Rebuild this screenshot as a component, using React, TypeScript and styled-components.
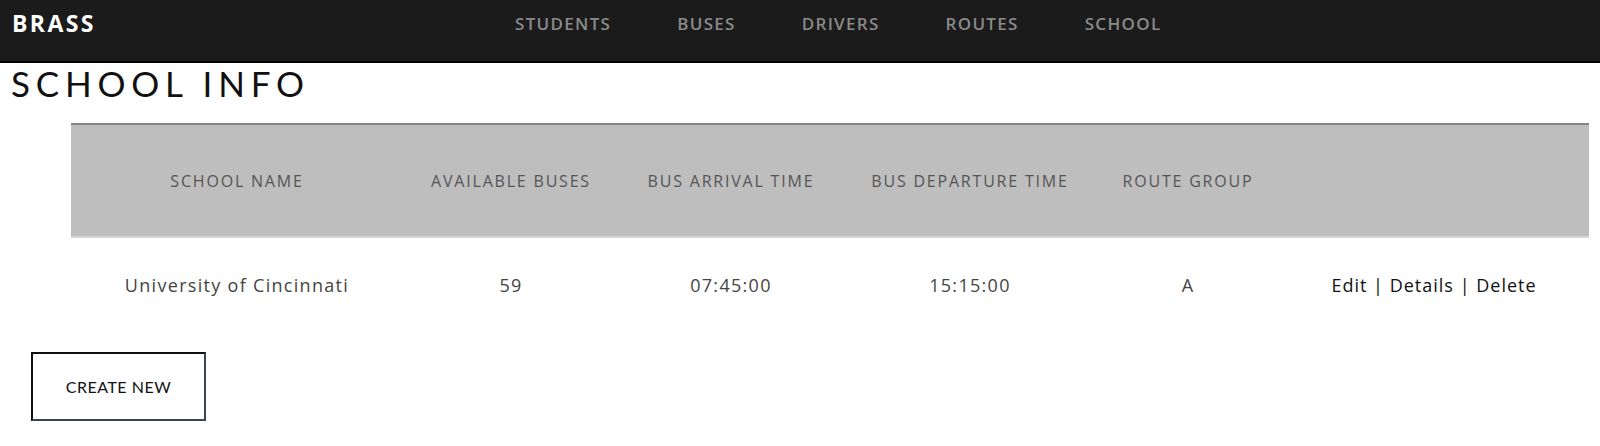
import React from "react";
import styled, { createGlobalStyle } from "styled-components";

const GlobalStyle = createGlobalStyle`
  html, body { margin: 0; padding: 0; background: #fff; }
  body { font-family: "Open Sans", "Liberation Sans", sans-serif; }
`;

const NavBar = styled.header`
  background: #1b1b1b;
  border-bottom: 2px solid #000;
  display: flex;
  align-items: flex-start;
  padding: 9px 12px 0 12px;
  box-sizing: border-box;
  height: 63px;
`;

const Brand = styled.div`
  font-family: "Open Sans", sans-serif;
  font-weight: 700;
  font-size: 23px;
  line-height: 28px;
  color: #fff;
  letter-spacing: 2.4px;
  width: 85px;
`;

const NavList = styled.nav`
  display: flex;
  gap: 66px;
  margin-left: 418px;
  padding-top: 3px;
`;

const NavItem = styled.a`
  font-family: "Open Sans", sans-serif;
  font-weight: 600;
  font-size: 17px;
  line-height: 24px;
  letter-spacing: 1.3px;
  color: #8a8a8a;
  text-transform: uppercase;
  text-decoration: none;
`;

const Title = styled.h1`
  margin: 0;
  padding-left: 11px;
  font-family: "Lato", sans-serif;
  font-weight: 400;
  font-size: 35px;
  line-height: 40px;
  letter-spacing: 5.8px;
  color: #111;
`;

const TableWrap = styled.div`
  padding: 20px 11px 0 71px;
`;

const Table = styled.table`
  width: 100%;
  border-collapse: collapse;
  table-layout: fixed;
`;

const HeadRow = styled.tr`
  background: #bebebe;
  border-top: 2px solid #858585;
  border-bottom: 2px solid #d4d4d4;
  height: 113px;
`;

const Th = styled.th`
  font-family: "Open Sans", sans-serif;
  font-weight: 400;
  font-size: 16px;
  letter-spacing: 1.8px;
  color: #555;
  text-align: center;
  padding: 0;
`;

const Row = styled.tr`
  height: 94px;
`;

const Td = styled.td<{ $dark?: boolean }>`
  font-family: "Open Sans", sans-serif;
  font-size: 18px;
  letter-spacing: ${(p) => (p.$dark ? "1px" : "1.3px")};
  color: ${(p) => (p.$dark ? "#111" : "#444")};
  text-align: center;
  padding: 0;
`;

const ActionLink = styled.a`
  color: #111;
  text-decoration: none;
`;

const ButtonArea = styled.div`
  padding: 21px 0 0 31px;
`;

const CreateButton = styled.button`
  width: 175px;
  height: 69px;
  background: #fff;
  border: 2px solid;
  border-color: #111 #3d434b #3d434b #111;
  font-family: "Lato", sans-serif;
  font-size: 16px;
  color: #111;
  letter-spacing: 0.5px;
  cursor: pointer;
`;

const columns = [
  { label: "SCHOOL NAME", width: 332 },
  { label: "AVAILABLE BUSES", width: 216 },
  { label: "BUS ARRIVAL TIME", width: 224 },
  { label: "BUS DEPARTURE TIME", width: 254 },
  { label: "ROUTE GROUP", width: 182 },
  { label: "", width: undefined },
];

export default function App() {
  return (
    <>
      <GlobalStyle />
      <NavBar>
        <Brand>BRASS</Brand>
        <NavList>
          {["Students", "Buses", "Drivers", "Routes", "School"].map((n) => (
            <NavItem key={n} href="#">
              {n}
            </NavItem>
          ))}
        </NavList>
      </NavBar>
      <Title>SCHOOL INFO</Title>
      <TableWrap>
        <Table>
          <colgroup>
            {columns.map((c, i) => (
              <col key={i} style={c.width ? { width: c.width } : undefined} />
            ))}
          </colgroup>
          <thead>
            <HeadRow>
              {columns.map((c, i) => (
                <Th key={i}>{c.label}</Th>
              ))}
            </HeadRow>
          </thead>
          <tbody>
            <Row>
              <Td>University of Cincinnati</Td>
              <Td>59</Td>
              <Td>07:45:00</Td>
              <Td>15:15:00</Td>
              <Td>A</Td>
              <Td $dark>
                <ActionLink href="#">Edit</ActionLink> |{" "}
                <ActionLink href="#">Details</ActionLink> |{" "}
                <ActionLink href="#">Delete</ActionLink>
              </Td>
            </Row>
          </tbody>
        </Table>
      </TableWrap>
      <ButtonArea>
        <CreateButton>CREATE NEW</CreateButton>
      </ButtonArea>
    </>
  );
}
